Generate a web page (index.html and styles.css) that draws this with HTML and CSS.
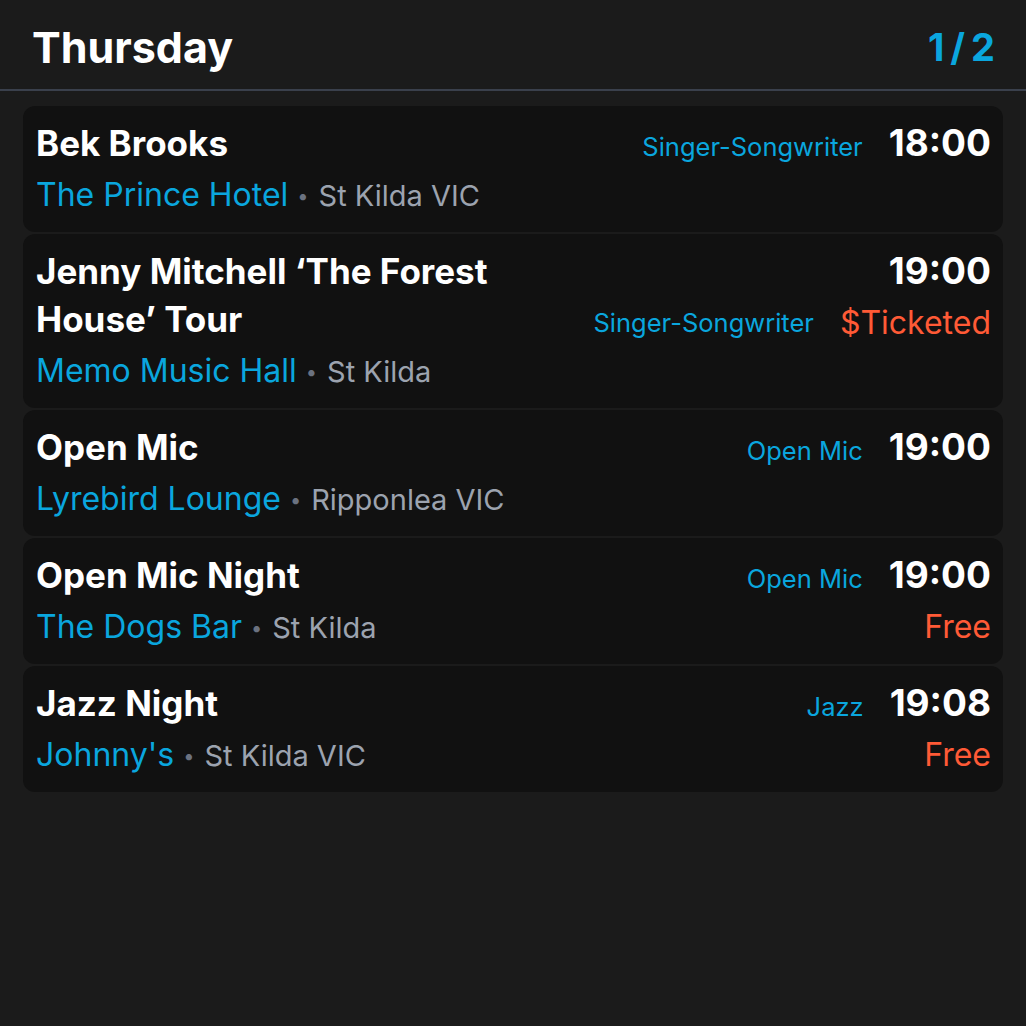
FILE: index.html
```html
<!DOCTYPE html>
<html>
<head>
<meta charset="utf-8">
<link rel="stylesheet" href="styles.css">
</head>
<body>
<div class="app">
  <header class="header">
    <h1 class="day">Thursday</h1>
    <div class="pager">1 / 2</div>
  </header>
  <div class="list">
    <div class="card">
      <div class="main">
        <div class="top"><div class="title">Bek Brooks</div><div class="genre">Singer-Songwriter</div></div>
        <div class="venue"><span class="vname">The Prince Hotel</span><span class="dot">•</span><span class="loc">St Kilda VIC</span></div>
      </div>
      <div class="side"><div class="time">18:00</div></div>
    </div>
    <div class="card">
      <div class="main">
        <div class="top"><div class="title">Jenny Mitchell ‘The Forest House’ Tour</div><div class="genre">Singer-Songwriter</div></div>
        <div class="venue"><span class="vname">Memo Music Hall</span><span class="dot">•</span><span class="loc">St Kilda</span></div>
      </div>
      <div class="side"><div class="time">19:00</div><div class="price">$Ticketed</div></div>
    </div>
    <div class="card">
      <div class="main">
        <div class="top"><div class="title">Open Mic</div><div class="genre">Open Mic</div></div>
        <div class="venue"><span class="vname">Lyrebird Lounge</span><span class="dot">•</span><span class="loc">Ripponlea VIC</span></div>
      </div>
      <div class="side"><div class="time">19:00</div></div>
    </div>
    <div class="card">
      <div class="main">
        <div class="top"><div class="title">Open Mic Night</div><div class="genre">Open Mic</div></div>
        <div class="venue"><span class="vname">The Dogs Bar</span><span class="dot">•</span><span class="loc">St Kilda</span></div>
      </div>
      <div class="side"><div class="time">19:00</div><div class="price">Free</div></div>
    </div>
    <div class="card">
      <div class="main">
        <div class="top"><div class="title">Jazz Night</div><div class="genre">Jazz</div></div>
        <div class="venue"><span class="vname">Johnny's</span><span class="dot">•</span><span class="loc">St Kilda VIC</span></div>
      </div>
      <div class="side"><div class="time">19:08</div><div class="price">Free</div></div>
    </div>
  </div>
</div>
</body>
</html>
```

FILE: styles.css
```css
html, body {
  margin: 0;
  padding: 0;
  background: #1b1b1b;
}
body {
  font-family: Inter, "Noto Sans", sans-serif;
  color: #ffffff;
  width: 1026px;
  height: 1026px;
  overflow: hidden;
}
.header {
  display: flex;
  justify-content: space-between;
  align-items: center;
  padding: 4px 31px 0 32px;
  border-bottom: 2px solid #3a404c;
  box-sizing: border-box;
  height: 91px;
}
.day {
  margin: 0;
  font-size: 43px;
  font-weight: 700;
}
.pager {
  font-size: 38px;
  font-weight: 700;
  color: #0aa6de;
  word-spacing: -3px;
}
.list {
  display: flex;
  flex-direction: column;
  gap: 2px;
  padding: 15px 23px;
}
.card {
  display: flex;
  background: #111111;
  border-radius: 12px;
  padding: 13px 12px 13px 13px;
  gap: 26px;
}
.main {
  flex: 1;
  display: flex;
  flex-direction: column;
  gap: 4px;
  min-width: 0;
}
.top {
  display: flex;
  align-items: last baseline;
  gap: 24px;
}
.title {
  flex: 1;
  font-size: 35px;
  font-weight: 700;
  line-height: 48px;
}
.genre {
  font-size: 25.5px;
  line-height: 36px;
  color: #0aa6de;
  white-space: nowrap;
}
.venue {
  font-size: 32px;
  line-height: 48px;
  height: 48px;
  white-space: nowrap;
}
.vname { color: #0aa6de; }
.dot {
  color: #6b7280;
  font-size: 20px;
  line-height: 1;
  vertical-align: 3px;
  margin: 0 10px 0 9px;
}
.loc {
  color: #9ca3af;
  font-size: 29px;
}
.side {
  display: flex;
  flex-direction: column;
  align-items: flex-end;
  gap: 4px;
}
.time {
  font-size: 37px;
  font-weight: 700;
  line-height: 48px;
}
.price {
  font-size: 32px;
  line-height: 48px;
  color: #ff5a36;
}
```
